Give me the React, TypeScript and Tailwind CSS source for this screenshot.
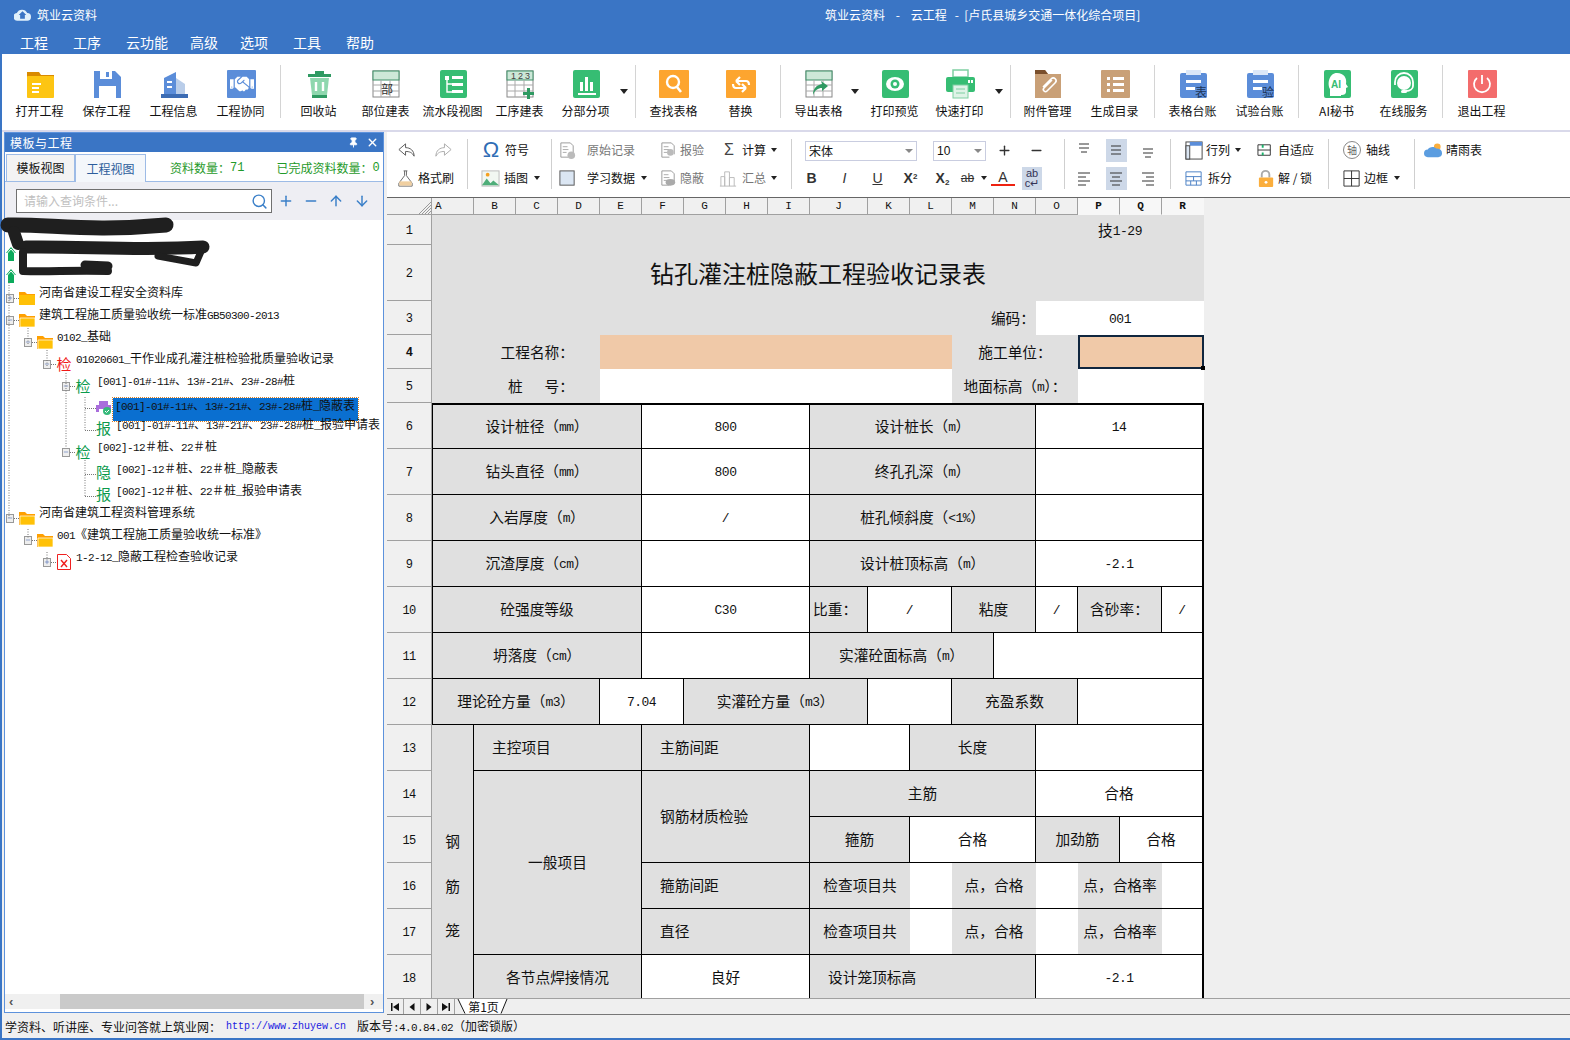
import type { ReactNode } from 'react'
import { FaHandshake } from 'react-icons/fa'
import { Plus, Minus, ArrowUp, ArrowDown, Search, Pin, X } from 'lucide-react'

const SHEET_LATIN = "relative top-[1px] font-['Liberation_Mono'] text-[13px] tracking-[-0.5px]"
const TREE_LATIN = "font-['Liberation_Mono'] text-[11px] tracking-[-0.6px]"

// ascii runs get a narrower face, like SimSun's half width latin
function Mix({ t, latin }: { t: string; latin: string }) {
  return (
    <>
      {t.split(/([\x20-\x7e]+)/).map((part, i) =>
        /^[\x20-\x7e]+$/.test(part) ? <span key={i} className={latin}>{part}</span> : <span key={i}>{part}</span>
      )}
    </>
  )
}

/* ---------- big toolbar ---------- */

function Big({ label, children }: { label: string; children: ReactNode }) {
  return (
    <div className="flex flex-col items-center w-[67px] shrink-0">
      <svg viewBox="0 0 32 30" className="w-[32px] h-[30px] mt-[15px]">{children}</svg>
      <div className="text-[12px] leading-4 mt-[4px] text-[#111] whitespace-nowrap">{label}</div>
    </div>
  )
}

function Sep({ className }: { className: string }) {
  return <div className={`w-px h-[53px] mt-[11px] bg-[#d4d4d4] shrink-0 ${className}`} />
}

function Drop({ className }: { className: string }) {
  return <div className={`w-0 h-0 mt-[35px] border-x-[4px] border-t-[5px] border-x-transparent border-t-[#222] shrink-0 ${className}`} />
}

function SheetIcon({ head, children }: { head: ReactNode; children?: ReactNode }) {
  return (
    <>
      <rect x="3" y="2" width="26" height="26" fill="#fff" stroke="#888" />
      <rect x="3" y="2" width="26" height="9" fill="#cde8d8" stroke="#3f8f68" />
      <path d="M3 16h26M3 22h26M11 11v17M20 11v17" stroke="#aaa" fill="none" />
      {head}
      {children}
    </>
  )
}

function GreenBox({ children }: { children: ReactNode }) {
  return (
    <>
      <rect x="3" y="1" width="27" height="28" rx="2" fill="#36bd73" />
      {children}
    </>
  )
}

function OrangeBox({ children }: { children: ReactNode }) {
  return (
    <>
      <rect x="1" y="1" width="30" height="28" rx="1" fill="#fda52f" />
      {children}
    </>
  )
}

function Clip({ ch }: { ch: string }) {
  return (
    <>
      <rect x="3" y="4" width="27" height="25" rx="2" fill="#5b8dd9" />
      <rect x="9" y="1" width="15" height="5" fill="#dbe7f8" />
      <rect x="9" y="11" width="15" height="3" fill="#fff" />
      <rect x="9" y="18" width="9" height="3" fill="#fff" />
      <text x="18" y="28" fontSize="12" fill="#1d3557" fontFamily="Noto Sans CJK SC">{ch}</text>
    </>
  )
}

function TopToolbar() {
  return (
    <div className="flex h-[76px] bg-white pl-[4px] overflow-hidden">
      <Big label="打开工程">
        <path d="M3 3h12l2 3h13v4H3z" fill="#d98a00" />
        <rect x="3" y="7" width="27" height="22" rx="1" fill="#fdc513" />
        <path d="M8 15h9M8 19h7M8 23h7" stroke="#fff" strokeWidth="2" />
      </Big>
      <Big label="保存工程">
        <path d="M3 2h21l6 6v21H3z" fill="#5b8dd9" />
        <rect x="9" y="2" width="12" height="8" fill="#fff" />
        <rect x="15" y="3" width="3" height="5" fill="#5b8dd9" />
        <rect x="8" y="17" width="17" height="12" fill="#fff" />
      </Big>
      <Big label="工程信息">
        <path d="M6 9l12-6v23H6z" fill="#5b8dd9" />
        <path d="M18 9l9 6v11h-9z" fill="#b9cde9" />
        <rect x="3" y="25" width="27" height="4" fill="#3c6cb4" />
        <path d="M9 13h5M9 18h5" stroke="#fff" strokeWidth="2" />
      </Big>
      <Big label="工程协同">
        <rect x="2" y="1" width="29" height="28" rx="1" fill="#5b8dd9" />
        <foreignObject x="5" y="3" width="24" height="24">
          <FaHandshake className="w-[24px] h-[24px] text-white" />
        </foreignObject>
      </Big>
      <Sep className="ml-[6px]" />
      <div className="flex ml-[4px]">
        <Big label="回收站">
          <rect x="5" y="5" width="23" height="3" fill="#2f9a62" />
          <rect x="12" y="2" width="9" height="3" fill="#2f9a62" />
          <path d="M7 9h19l-2 17H9z" fill="#8fd7ae" />
          <rect x="9" y="26" width="15" height="3" fill="#2f9a62" />
          <path d="M13 13v9M20 13v9" stroke="#fff" strokeWidth="2.4" />
        </Big>
        <Big label="部位建表">
          <SheetIcon head={<text x="11" y="25" fontSize="12" fill="#333" fontFamily="Noto Sans CJK SC">部</text>} />
        </Big>
        <Big label="流水段视图">
          <GreenBox>
            <path d="M8 7h4v4H8zM15 7h11v3H15zM15 14h11v3H15zM15 21h11v3H15z" fill="#fff" />
            <path d="M10 11v12h5M10 15h5" stroke="#fff" strokeWidth="1.4" fill="none" />
          </GreenBox>
        </Big>
        <Big label="工序建表">
          <SheetIcon head={<text x="7" y="10" fontSize="9" fill="#444" letterSpacing="2" fontFamily="Liberation Sans">123</text>}>
            <path d="M23 19h3v4h4v3h-4v4h-3v-4h-4v-3h4z" fill="#2f9a62" />
          </SheetIcon>
        </Big>
        <div className="-ml-[1px]">
          <Big label="分部分项">
            <GreenBox>
              <path d="M10 13h3v9h-3zM15 8h3v14h-3zM20 13h3v9h-3z" fill="#fff" />
              <rect x="8" y="24" width="18" height="2" fill="#fff" />
            </GreenBox>
          </Big>
        </div>
      </div>
      <Drop className="ml-[1px]" />
      <Sep className="ml-[7px]" />
      <div className="flex ml-[4px]">
        <Big label="查找表格">
          <OrangeBox>
            <circle cx="15" cy="13" r="6" fill="none" stroke="#fff" strokeWidth="2.4" />
            <path d="M19 18l4 5" stroke="#fff" strokeWidth="2.6" />
          </OrangeBox>
        </Big>
        <Big label="替换">
          <OrangeBox>
            <path d="M11 12h10c3 0 3 2 3 4M11 12l4-4M11 12l4 4M21 19H11c-3 0-3-2-3-4M21 19l-4-4M21 19l-4 4" stroke="#fff" strokeWidth="2.2" fill="none" />
          </OrangeBox>
        </Big>
      </div>
      <Sep className="ml-[6px]" />
      <div className="ml-[4px]">
        <Big label="导出表格">
          <SheetIcon head={<path d="M10 26c0-7 4-10 9-11l-1-3 7 5-6 5v-3c-4 0-7 2-9 7z" fill="#2f9a62" />} />
        </Big>
      </div>
      <Drop className="-ml-[1px]" />
      <div className="flex ml-[2px]">
        <Big label="打印预览">
          <GreenBox>
            <ellipse cx="16" cy="15" rx="9" ry="7" fill="#fff" />
            <circle cx="16" cy="15" r="4.5" fill="#36bd73" />
            <circle cx="16" cy="15" r="2" fill="#fff" />
          </GreenBox>
        </Big>
        <div className="-ml-[2px]">
          <Big label="快速打印">
            <rect x="9" y="1" width="15" height="7" fill="#fff" stroke="#7fcfa2" strokeWidth="1.5" />
            <rect x="2" y="8" width="29" height="15" rx="2" fill="#36bd73" />
            <rect x="24" y="11" width="2" height="3" fill="#fff" />
            <rect x="27" y="11" width="2" height="3" fill="#fff" />
            <rect x="9" y="16" width="15" height="13" fill="#dff3e7" stroke="#7fcfa2" />
            <path d="M12 20h9M12 24h9" stroke="#7fcfa2" />
          </Big>
        </div>
      </div>
      <Drop className="ml-[2px]" />
      <Sep className="ml-[7px]" />
      <div className="flex ml-[3px]">
        <Big label="附件管理">
          <path d="M3 1h10l3 4h13v24H3z" fill="#c9a077" />
          <path d="M3 1h10l3 4H3z" fill="#7a4f2c" />
          <path d="M20 11l-8 8c-2 2 1 5 3 3l8-8c3-3-1-7-4-4l-8 8" fill="none" stroke="#fff" strokeWidth="1.6" />
        </Big>
        <Big label="生成目录">
          <rect x="2" y="1" width="29" height="28" rx="1" fill="#c9a077" />
          <path d="M8 8h3v3H8zM14 8h11v3H14zM8 14h3v3H8zM14 14h11v3H14zM8 20h3v3H8zM14 20h11v3H14z" fill="#fff" />
        </Big>
      </div>
      <Sep className="ml-[6px]" />
      <div className="flex ml-[4px]">
        <Big label="表格台账"><Clip ch="表" /></Big>
        <Big label="试验台账"><Clip ch="验" /></Big>
      </div>
      <Sep className="ml-[5px]" />
      <div className="flex ml-[4px]">
        <Big label="AI秘书">
          <GreenBox>
            <path d="M16 4c7 0 10 5 9 11l2 3-2 1v4c0 2-2 3-4 3h-1v1H9v-7c-3-5-1-16 7-16z" fill="#fff" />
            <text x="10" y="19" fontSize="10" fontWeight="700" fill="#36bd73" fontFamily="Liberation Sans">AI</text>
          </GreenBox>
        </Big>
        <Big label="在线服务">
          <GreenBox>
            <circle cx="16" cy="14" r="7" fill="#fff" />
            <path d="M7 16v-3a9 9 0 0 1 18 0v4c0 3-3 5-7 5" fill="none" stroke="#fff" strokeWidth="1.8" />
            <rect x="13" y="21" width="6" height="3" rx="1.5" fill="#fff" />
          </GreenBox>
        </Big>
      </div>
      <Sep className="ml-[5px]" />
      <div className="ml-[5px]">
        <Big label="退出工程">
          <rect x="2" y="1" width="29" height="28" rx="1" fill="#f36c6c" />
          <path d="M11 9a8 8 0 1 0 10 0" fill="none" stroke="#fff" strokeWidth="1.8" />
          <path d="M16 6v9" stroke="#fff" strokeWidth="1.8" />
        </Big>
      </div>
    </div>
  )
}

/* ---------- format toolbar ---------- */

function Ico({ className, children }: { className?: string; children: ReactNode }) {
  return <svg viewBox="0 0 20 20" className={`w-[19px] h-[19px] shrink-0 ${className ?? ''}`}>{children}</svg>
}

function Car() {
  return <div className="w-0 h-0 border-x-[3px] border-t-[4px] border-x-transparent border-t-[#222] shrink-0" />
}

function VSep() {
  return <div className="w-px h-[50px] mt-[3px] bg-[#cfcfcf] shrink-0" />
}

function Doc({ children }: { children: ReactNode }) {
  return (
    <Ico>
      <path d="M3 2h10l3 3v9M3 2v15h8" fill="none" stroke="#999" />
      <path d="M5 6h5M5 9h6M5 12h4" stroke="#aaa" />
      {children}
    </Ico>
  )
}

function AlignLines({ d, on }: { d: string; on?: boolean }) {
  return (
    <div className={`flex items-center justify-center w-[21px] h-[23px] ${on ? 'bg-[#cdd8e8]' : ''}`}>
      <svg viewBox="0 0 14 16" className="w-[14px] h-[16px]">
        <path d={d} stroke="#333" fill="none" />
      </svg>
    </div>
  )
}

function FormatToolbar() {
  return (
    <div className="flex h-[65px] bg-white pt-[4px] text-[12px] leading-none text-[#111] shrink-0">
      <div className="w-[80px] shrink-0">
        <div className="flex items-center h-7">
          <Ico className="ml-[10px]">
            <path d="M9 3L2 9l7 6v-4c4 0 7 1 9 5 0-6-4-9-9-9z" fill="none" stroke="#555" />
          </Ico>
          <Ico className="ml-[18px]">
            <path d="M11 3l7 6-7 6v-4c-4 0-7 1-9 5 0-6 4-9 9-9z" fill="none" stroke="#aaa" />
          </Ico>
        </div>
        <div className="flex items-center h-7">
          <Ico className="ml-[9px]">
            <path d="M8 2h4M9 2v5L3 15v3h14v-3l-6-8V2" fill="none" stroke="#666" />
            <path d="M3.500 13h13v4.500h-13z" fill="#f0cfa0" />
          </Ico>
          <span className="ml-[3px]">格式刷</span>
        </div>
      </div>
      <VSep />
      <div className="w-[83px] shrink-0 pl-[13px]">
        <div className="flex items-center h-7">
          <span className="w-[20px] text-center text-[22px] text-[#2f6db5] font-['Liberation_Sans']">Ω</span>
          <span className="ml-[4px]">符号</span>
        </div>
        <div className="flex items-center h-7">
          <Ico>
            <rect x="1" y="2" width="18" height="16" fill="#f2f7f2" stroke="#bbb" />
            <path d="M1 17l5-7 4 5 3-3 6 5z" fill="#4fae7a" />
            <circle cx="7" cy="6" r="2" fill="#f5a020" />
          </Ico>
          <span className="ml-[4px] mr-[6px]">插图</span>
          <Car />
        </div>
      </div>
      <VSep />
      <div className="w-[239px] shrink-0 pl-[6px]">
        <div className="flex items-center h-7 text-[#777]">
          <div className="flex items-center w-[101px]">
            <Doc><circle cx="14" cy="15" r="4" fill="#bbb" /></Doc>
            <span className="ml-[10px]">原始记录</span>
          </div>
          <div className="flex items-center w-[60px]">
            <Doc><circle cx="12" cy="12" r="3.500" fill="#bbb" /></Doc>
            <span className="ml-[2px]">报验</span>
          </div>
          <div className="flex items-center text-[#111]">
            <span className="w-[20px] text-center text-[16px] text-[#444] font-['Liberation_Sans']">Σ</span>
            <span className="ml-[3px] mr-[5px]">计算</span>
            <Car />
          </div>
        </div>
        <div className="flex items-center h-7 text-[#777]">
          <div className="flex items-center w-[101px]">
            <Ico>
              <rect x="2" y="2" width="15" height="15" fill="#dbe6f3" stroke="#555" />
            </Ico>
            <span className="ml-[10px] mr-[6px] text-[#111]">学习数据</span>
            <Car />
          </div>
          <div className="flex items-center w-[60px]">
            <Doc><ellipse cx="12" cy="14" rx="5" ry="3.500" fill="#aaa" /></Doc>
            <span className="ml-[2px]">隐蔽</span>
          </div>
          <div className="flex items-center">
            <Ico>
              <path d="M2 18V8h4v10M6 18V3h5v15M11 18V9h5v9M1 18h17" fill="none" stroke="#bbb" />
            </Ico>
            <span className="ml-[4px] mr-[5px]">汇总</span>
            <Car />
          </div>
        </div>
      </div>
      <VSep />
      <div className="w-[272px] shrink-0">
        <div className="flex items-center h-7">
          <div className="flex items-center justify-between w-[112px] h-[20px] mt-[2px] ml-[13px] border border-[#c9cde0] pl-[3px] pr-[3px]">
            宋体
            <div className="w-0 h-0 border-x-[4px] border-t-[4px] border-x-transparent border-t-[#888]" />
          </div>
          <div className="flex items-center justify-between w-[53px] h-[20px] mt-[2px] ml-[16px] border border-[#c9cde0] pl-[3px] pr-[3px] font-['Liberation_Sans']">
            10
            <div className="w-0 h-0 border-x-[4px] border-t-[4px] border-x-transparent border-t-[#888]" />
          </div>
          <Plus size={15} strokeWidth={2.2} className="ml-[11px] text-[#333]" />
          <Minus size={15} strokeWidth={2.2} className="ml-[17px] text-[#333]" />
        </div>
        <div className="flex items-center h-7 font-['Liberation_Sans'] text-[14px] pl-[3px]">
          <span className="w-[33px] text-center font-bold text-[#333]">B</span>
          <span className="w-[33px] text-center italic text-[#333]">I</span>
          <span className="w-[33px] text-center underline text-[#333]">U</span>
          <span className="w-[33px] text-center font-bold text-[#333]">X<sup className="text-[8px]">2</sup></span>
          <span className="w-[31px] text-center font-bold text-[#333]">X<sub className="text-[8px]">2</sub></span>
          <span className="w-[19px] text-center text-[12px] line-through text-[#333]">ab</span>
          <div className="ml-[4px]"><Car /></div>
          <span className="w-[24px] ml-[4px] text-center border-b-2 border-[#e21] leading-[14px] text-[#333]">A</span>
          <span className="flex flex-col items-center justify-center w-[20px] h-[23px] ml-[7px] bg-[#cdd8e8] text-[11px] leading-[10px] text-[#335]">
            <span>ab</span>
            <span>c↵</span>
          </span>
        </div>
      </div>
      <VSep />
      <div className="w-[105px] shrink-0 grid grid-cols-[32px_32px_32px] pl-[3px] justify-items-center items-center h-14">
        <AlignLines d="M2 2h10M2 6h10M4 10h6" />
        <AlignLines on d="M2 4h10M2 8h10M2 12h10" />
        <AlignLines d="M2 7h10M2 11h10M4 15h6" />
        <AlignLines d="M1 3h12M1 7h8M1 11h12M1 15h8" />
        <AlignLines on d="M1 3h12M3 7h8M1 11h12M3 15h8" />
        <AlignLines d="M1 3h12M5 7h8M1 11h12M5 15h8" />
      </div>
      <VSep />
      <div className="w-[157px] shrink-0 pl-[14px]">
        <div className="flex items-center h-7">
          <div className="flex items-center w-[72px]">
            <Ico>
              <rect x="1" y="1" width="17" height="18" fill="#fff" stroke="#444" />
              <rect x="5" y="1" width="13" height="4" fill="#5b8dd9" />
              <rect x="1" y="5" width="4" height="14" fill="#dbe6f3" stroke="#444" />
            </Ico>
            <span className="ml-[2px] mr-[5px]">行列</span>
            <Car />
          </div>
          <Ico>
            <path d="M1 4h13M1 15h13M1 4v11M14 4v11M1 9.500h13" stroke="#333" fill="none" />
            <path d="M6 4v3M6 12v3" stroke="#19b36b" strokeWidth="2" />
          </Ico>
          <span className="ml-[2px]">自适应</span>
        </div>
        <div className="flex items-center h-7">
          <div className="flex items-center w-[72px]">
            <Ico>
              <path d="M1 3h16v14H1zM1 8h16M1 12.500h16M9 8v4.500M6 12.500V17M12 12.500V17" fill="none" stroke="#4a80c4" />
            </Ico>
            <span className="ml-[4px]">拆分</span>
          </div>
          <Ico>
            <path d="M5 9V6a4 4 0 0 1 8 0v3" fill="none" stroke="#aaa" strokeWidth="2" />
            <rect x="2" y="9" width="15" height="10" rx="1" fill="#fbae3c" />
            <circle cx="9.500" cy="14" r="1.500" fill="#fff" />
          </Ico>
          <span className="ml-[2px] whitespace-pre">解 / 锁</span>
        </div>
      </div>
      <VSep />
      <div className="w-[85px] shrink-0 pl-[14px]">
        <div className="flex items-center h-7">
          <span className="flex items-center justify-center w-[18px] h-[18px] rounded-full border border-[#888] text-[10px] text-[#666]">轴</span>
          <span className="ml-[5px]">轴线</span>
        </div>
        <div className="flex items-center h-7">
          <Ico>
            <path d="M1 2h16v16H1zM9 2v16M1 10h16" fill="none" stroke="#333" />
          </Ico>
          <span className="ml-[2px] mr-[6px]">边框</span>
          <Car />
        </div>
      </div>
      <VSep />
      <div className="pl-[9px]">
        <div className="flex items-center h-7">
          <Ico>
            <circle cx="14" cy="6" r="3.500" fill="#fbae3c" />
            <path d="M4 17a4 4 0 0 1 0-8c1-3 7-4 9-1 4 0 6 2 6 5s-2 4-4 4z" fill="#5b9de0" />
          </Ico>
          <span className="ml-[3px]">晴雨表</span>
        </div>
      </div>
    </div>
  )
}

/* ---------- left tree ---------- */

const BOX_PAD = ['pl-[1px]', 'pl-[19px]', 'pl-[38px]', 'pl-[57px]']

function Folder({ open }: { open?: boolean }) {
  return (
    <svg viewBox="0 0 16 14" className="w-[16px] h-[14px] shrink-0">
      <path d="M0 1h6l2 2h8v11H0z" fill="#ffa000" />
      {open ? <path d="M1 5h15v9H1z" fill="#ffc107" stroke="#fff" strokeWidth="0.7" /> : <rect x="0" y="4" width="16" height="10" fill="#ffc107" />}
    </svg>
  )
}

function TreeRow({ level, plus, icon, text, sel }: { level: number; plus?: boolean; icon: ReactNode; text: string; sel?: boolean }) {
  const label = (
    <span className={`inline-block whitespace-nowrap text-[12px] leading-none ${sel ? '-translate-y-[2px] bg-[#0a6fd0] outline-1 outline-dotted outline-[#e08020] pt-[1px] pb-[8px] pl-[2px] pr-[3px] -ml-[3px]' : '-translate-y-[8px]'}`}>
      <Mix t={text} latin={TREE_LATIN} />
    </span>
  )
  if (level === 4) {
    return (
      <div className="flex items-center h-[22px] pl-[80px]">
        <div className="w-[11px] border-t border-dotted border-[#777] shrink-0" />
        <div className="w-[15px] flex justify-center shrink-0">{icon}</div>
        <div className="ml-[5px]">{label}</div>
      </div>
    )
  }
  return (
    <div className={`flex items-center h-[22px] ${BOX_PAD[level]}`}>
      <div className="flex items-center justify-center w-[8px] h-[9px] bg-[#eee] border border-[#999] text-[#3355aa] shrink-0">
        {plus ? <Plus size={8} strokeWidth={2} /> : <Minus size={8} strokeWidth={2} />}
      </div>
      <div className="w-[5px] border-t border-dotted border-[#777] shrink-0" />
      <div className="w-[16px] flex justify-center shrink-0">{icon}</div>
      <div className={level === 3 ? 'ml-[6px]' : 'ml-[4px]'}>{label}</div>
    </div>
  )
}

function Tag({ ch, red, leaf }: { ch: string; red?: boolean; leaf?: boolean }) {
  return (
    <span className={`text-[15px] leading-none ${leaf ? '-translate-y-[3px]' : '-translate-y-[1px]'} ${red ? 'text-[#f01818]' : 'text-[#0a9a4c]'}`}>
      {ch}
    </span>
  )
}

function GreenUp() {
  return (
    <div className="flex items-center h-[22px] pl-[1px]">
      <svg viewBox="0 0 10 14" className="w-[10px] h-[14px]">
        <path d="M5 0l5 6H8v8H2V6H0z" fill="#0bab5c" />
        <path d="M1.500 6L5 2l3.500 4" fill="none" stroke="#fff" />
      </svg>
    </div>
  )
}

function Tree() {
  return (
    <div className="relative flex-1 bg-white pt-[23px]">
      {/* dotted connector lines */}
      <svg className="absolute left-0 top-0 w-full h-full" fill="none" stroke="#777" strokeDasharray="1 1.5">
        <path d="M4 60V298M23 108V124M23 309V318M42 130V146M42 332V340M61 153V228M80 177V210M80 240V277" />
      </svg>
      <GreenUp />
      <GreenUp />
      <TreeRow level={0} plus icon={<Folder />} text="河南省建设工程安全资料库" />
      <TreeRow level={0} icon={<Folder open />} text="建筑工程施工质量验收统一标准GB50300-2013" />
      <TreeRow level={1} icon={<Folder open />} text="0102_基础" />
      <TreeRow level={2} icon={<Tag ch="检" red />} text="01020601_干作业成孔灌注桩检验批质量验收记录" />
      <TreeRow level={3} icon={<Tag ch="检" />} text="[001]-01#-11#、13#-21#、23#-28#桩" />
      <TreeRow
        level={4}
        sel
        icon={
          <svg viewBox="0 0 15 14" className="w-[15px] h-[14px]">
            <path d="M3 0h9v4H3zM0 4h15v7H0z" fill="#a96ddc" />
            <rect x="3" y="8" width="8" height="6" fill="#fff" />
            <circle cx="11" cy="10" r="4" fill="#35b97a" />
            <path d="M9 10l1.500 1.500L13 9" stroke="#fff" fill="none" />
          </svg>
        }
        text="[001]-01#-11#、13#-21#、23#-28#桩_隐蔽表"
      />
      <TreeRow level={4} icon={<Tag ch="报" leaf />} text="[001]-01#-11#、13#-21#、23#-28#桩_报验申请表" />
      <TreeRow level={3} icon={<Tag ch="检" />} text="[002]-12＃桩、22＃桩" />
      <TreeRow level={4} icon={<Tag ch="隐" leaf />} text="[002]-12＃桩、22＃桩_隐蔽表" />
      <TreeRow level={4} icon={<Tag ch="报" leaf />} text="[002]-12＃桩、22＃桩_报验申请表" />
      <TreeRow level={0} icon={<Folder open />} text="河南省建筑工程资料管理系统" />
      <TreeRow level={1} icon={<Folder open />} text="001《建筑工程施工质量验收统一标准》" />
      <TreeRow
        level={2}
        plus
        icon={
          <svg viewBox="0 0 14 16" className="w-[14px] h-[16px]">
            <path d="M.5.5h9l4 4v11H.5z" fill="#fff" stroke="#f02020" />
            <path d="M4 6l6 7M10 6l-6 7" stroke="#f02020" strokeWidth="1.4" />
          </svg>
        }
        text="1-2-12_隐蔽工程检查验收记录"
      />
      {/* redaction scribble from the screenshot */}
      <svg className="absolute left-[-5px] top-[-15px] w-[230px] h-[80px]" viewBox="0 205 230 80" fill="none" stroke="#1f1f1f" strokeLinecap="round" strokeLinejoin="round">
        <path d="M8 225C50 224 90 232 166 225" strokeWidth="15" />
        <path d="M14 232L18 244" strokeWidth="12" />
        <path d="M26 247C80 246 140 251 203 247" strokeWidth="13" />
        <path d="M203 247L196 263L158 256" strokeWidth="7" />
        <path d="M23 252V271C50 272 70 270 108 271" strokeWidth="8" />
        <path d="M85 265L108 266" strokeWidth="9" />
      </svg>
    </div>
  )
}

function LeftPanel() {
  return (
    <div className="flex flex-col w-[380px] h-[881px] ml-[2px] shrink-0 border border-[#5d92dc] bg-white text-[#111]">
      <div className="flex items-center justify-between h-[19px] bg-[#3a75c5] text-white text-[12px] pl-[5px] pr-[4px] shrink-0">
        <span className="tracking-[0.5px]">模板与工程</span>
        <div className="flex items-center gap-[7px]">
          <Pin size={11} fill="#fff" />
          <X size={13} strokeWidth={2.6} />
        </div>
      </div>
      <div className="flex h-[30px] pl-[1px] pt-[2px] text-[12px] bg-white border-b border-[#9dbbe6] shrink-0">
        <div className="flex items-center justify-center w-[69px] bg-[#f3f3f3] border border-b-0 border-[#9dbbe6]">模板视图</div>
        <div className="flex items-center justify-center w-[71px] h-[28px] bg-[#f4f7fb] border-x border-t border-[#9dbbe6] text-[#2c5d9c]">工程视图</div>
        <div className="flex items-center ml-[24px] text-[#1f9a2a] whitespace-nowrap">
          资料数量：<span className="font-['Liberation_Mono']">71</span>
        </div>
        <div className="flex items-center ml-[32px] text-[#1f9a2a] whitespace-nowrap">
          已完成资料数量：<span className="font-['Liberation_Mono']">0</span>
        </div>
      </div>
      <div className="flex items-center h-[38px] pl-[11px] bg-[#eeeef3] shrink-0">
        <div className="flex items-center justify-between w-[256px] h-[24px] bg-white border border-[#707070] pl-[7px] pr-[3px]">
          <span className="text-[12px] text-[#c0c0c0]">请输入查询条件...</span>
          <Search size={17} className="text-[#3a7fc8]" />
        </div>
        <Plus size={16} strokeWidth={2.2} className="ml-[6px] text-[#3a7fc8]" />
        <Minus size={16} strokeWidth={2.2} className="ml-[9px] text-[#3a7fc8]" />
        <ArrowUp size={16} strokeWidth={2.2} className="ml-[9px] text-[#3a7fc8]" />
        <ArrowDown size={16} strokeWidth={2.2} className="ml-[10px] text-[#3a7fc8]" />
      </div>
      <Tree />
      <div className="flex items-center h-[15px] bg-[#f0f0f0] mb-[3px] shrink-0 text-[#555]">
        <span className="w-[55px] pl-[4px] text-[13px] font-bold leading-none font-['Liberation_Sans']">‹</span>
        <div className="w-[304px] h-full bg-[#cacaca]" />
        <span className="pl-[6px] text-[13px] font-bold leading-none font-['Liberation_Sans']">›</span>
      </div>
    </div>
  )
}

/* ---------- spreadsheet ---------- */

const GRAY = 'bg-[#e0e0e0]'
const WHITE = 'bg-white'
const LINE = 'border-r border-b border-black'

function C({ at, bg = GRAY, left, line = LINE, t }: { at: string; bg?: string; left?: boolean; line?: string; t?: string }) {
  return (
    <div className={`flex items-center whitespace-pre ${left ? 'pl-[18px]' : 'justify-center'} ${at} ${bg} ${line}`}>
      {t ? <Mix t={t} latin={SHEET_LATIN} /> : null}
    </div>
  )
}

const COLS: [string, string][] = [
  ['B', 'w-[42px]'], ['C', 'w-[42px]'], ['D', 'w-[42px]'], ['E', 'w-[42px]'], ['F', 'w-[42px]'], ['G', 'w-[42px]'],
  ['H', 'w-[42px]'], ['I', 'w-[42px]'], ['J', 'w-[58px]'], ['K', 'w-[42px]'], ['L', 'w-[42px]'], ['M', 'w-[42px]'],
  ['N', 'w-[42px]'], ['O', 'w-[42px]'],
]

const ROW_H = ['h-[30px]', 'h-[56px]', 'h-[34px]', 'h-[34px]', 'h-[34px]', ...Array<string>(13).fill('h-[46px]')]

function HeadCell({ label, className }: { label: string; className: string }) {
  return <div className={`flex items-center justify-center h-full border-r border-[#a0a0a0] border-b ${className}`}>{label}</div>
}

function Sheet() {
  return (
    <div className="relative flex-1 overflow-hidden bg-[#efefef] border-t border-[#666] text-[14.7px] leading-none text-[#111]">
      <div className="flex h-[17px] font-['Liberation_Mono'] text-[11px]">
        <div className="relative w-[45px] border-r border-b border-[#a0a0a0] bg-[#f0f0f0]">
          <svg viewBox="0 0 12 12" className="absolute right-0 bottom-0 w-[12px] h-[12px]">
            <path d="M12 0L0 12M12 3L3 12M12 6L6 12M12 9L9 12" stroke="#999" />
          </svg>
        </div>
        <div className="flex items-center w-[42px] h-full pl-[3px] border-r border-b border-[#a0a0a0] bg-[#f0f0f0]">A</div>
        {COLS.map(([l, w]) => (
          <HeadCell key={l} label={l} className={`${w} bg-[#f0f0f0] border-b-[#a0a0a0]`} />
        ))}
        <HeadCell label="P" className="w-[42px] bg-[#f7f7f7] font-bold border-b-transparent" />
        <HeadCell label="Q" className="w-[42px] bg-[#f7f7f7] font-bold border-b-transparent" />
        <HeadCell label="R" className="w-[42px] bg-[#f7f7f7] font-bold border-b-transparent border-r-transparent" />
      </div>
      <div className="flex">
        <div className="w-[45px] shrink-0 font-['Liberation_Mono'] text-[12px] tracking-[-0.6px]">
          {ROW_H.map((h, i) => (
            <div key={i} className={`flex items-center justify-center pt-[2px] ${h} bg-[#f0f0f0] border-r border-b border-[#a0a0a0] ${i === 3 ? 'font-bold' : ''}`}>
              {i + 1}
            </div>
          ))}
        </div>
        <div className="grid grid-cols-[repeat(9,42px)_58px_repeat(8,42px)] grid-rows-[30px_56px_34px_34px_34px_repeat(14,46px)]">
          <C at="col-[1/16] row-[1/2]" line="" />
          <C at="col-[16/18] row-[1/2]" line="" t="技1-29" />
          <C at="col-[18/19] row-[1/2]" line="" />
          <div className={`flex items-center justify-center col-[1/19] row-[2/3] ${GRAY} text-[24px]`}>钻孔灌注桩隐蔽工程验收记录表</div>

          <div className={`flex items-center justify-end pr-[1px] col-[1/15] row-[3/4] ${GRAY}`}>编码：</div>
          <C at="col-[15/19] row-[3/4]" bg={WHITE} line="" t="001" />

          <div className={`flex items-center justify-end pr-[26px] col-[1/5] row-[4/5] ${GRAY}`}>工程名称：</div>
          <C at="col-[5/13] row-[4/5]" bg="bg-[#f0c9a8]" line="" />
          <C at="col-[13/16] row-[4/5]" line="" t="施工单位：" />
          <div className="relative col-[16/19] row-[4/5] bg-[#f0c9a8] border-2 border-[#10263f]">
            <div className="absolute -right-[3px] -bottom-[3px] w-[4px] h-[4px] bg-black" />
          </div>

          <div className={`flex items-center justify-end pr-[26px] col-[1/5] row-[5/6] whitespace-pre ${GRAY}`}>
            <Mix t="桩   号：" latin={SHEET_LATIN} />
          </div>
          <C at="col-[5/13] row-[5/6]" bg={WHITE} line="" />
          <C at="col-[13/16] row-[5/6]" line="" t="地面标高（m）：" />
          <C at="col-[16/19] row-[5/6]" bg={WHITE} line="" />

          <C at="col-[1/6] row-[6/7] border-t-2 border-l" t="设计桩径（mm）" />
          <C at="col-[6/10] row-[6/7] border-t-2" bg={WHITE} t="800" />
          <C at="col-[10/15] row-[6/7] border-t-2" t="设计桩长（m）" />
          <C at="col-[15/19] row-[6/7] border-t-2 border-r-2" bg={WHITE} t="14" />

          <C at="col-[1/6] row-[7/8] border-l" t="钻头直径（mm）" />
          <C at="col-[6/10] row-[7/8]" bg={WHITE} t="800" />
          <C at="col-[10/15] row-[7/8]" t="终孔孔深（m）" />
          <C at="col-[15/19] row-[7/8] border-r-2" bg={WHITE} />

          <C at="col-[1/6] row-[8/9] border-l" t="入岩厚度（m）" />
          <C at="col-[6/10] row-[8/9]" bg={WHITE} t="/" />
          <C at="col-[10/15] row-[8/9]" t="桩孔倾斜度（<1%）" />
          <C at="col-[15/19] row-[8/9] border-r-2" bg={WHITE} />

          <C at="col-[1/6] row-[9/10] border-l" t="沉渣厚度（cm）" />
          <C at="col-[6/10] row-[9/10]" bg={WHITE} />
          <C at="col-[10/15] row-[9/10]" t="设计桩顶标高（m）" />
          <C at="col-[15/19] row-[9/10] border-r-2" bg={WHITE} t="-2.1" />

          <C at="col-[1/6] row-[10/11] border-l" t="砼强度等级" />
          <C at="col-[6/10] row-[10/11]" bg={WHITE} t="C30" />
          <div className={`flex items-center pl-[3px] col-[10/11] row-[10/11] ${GRAY} ${LINE}`}>比重：</div>
          <C at="col-[11/13] row-[10/11]" bg={WHITE} t="/" />
          <C at="col-[13/15] row-[10/11]" t="粘度" />
          <C at="col-[15/16] row-[10/11]" bg={WHITE} t="/" />
          <C at="col-[16/18] row-[10/11]" t="含砂率：" />
          <C at="col-[18/19] row-[10/11] border-r-2" bg={WHITE} t="/" />

          <C at="col-[1/6] row-[11/12] border-l" t="坍落度（cm）" />
          <C at="col-[6/10] row-[11/12]" bg={WHITE} />
          <C at="col-[10/14] row-[11/12]" t="实灌砼面标高（m）" />
          <C at="col-[14/19] row-[11/12] border-r-2" bg={WHITE} />

          <C at="col-[1/5] row-[12/13] border-l" t="理论砼方量（m3）" />
          <C at="col-[5/7] row-[12/13]" bg={WHITE} t="7.04" />
          <C at="col-[7/11] row-[12/13]" t="实灌砼方量（m3）" />
          <C at="col-[11/13] row-[12/13]" bg={WHITE} />
          <C at="col-[13/16] row-[12/13]" t="充盈系数" />
          <C at="col-[16/19] row-[12/13] border-r-2" bg={WHITE} />

          <div className={`flex flex-col items-center justify-center gap-[30px] col-[1/2] row-[13/20] ${GRAY} border-r border-black`}>
            <span>钢</span>
            <span>筋</span>
            <span>笼</span>
          </div>
          <C at="col-[2/6] row-[13/14]" left t="主控项目" />
          <C at="col-[6/10] row-[13/14]" left t="主筋间距" />
          <C at="col-[10/12] row-[13/14]" bg={WHITE} />
          <C at="col-[12/15] row-[13/14]" t="长度" />
          <C at="col-[15/19] row-[13/14] border-r-2" bg={WHITE} />

          <C at="col-[2/6] row-[14/18]" t="一般项目" />
          <C at="col-[6/10] row-[14/16]" left t="钢筋材质检验" />
          <C at="col-[10/15] row-[14/15]" t="主筋" />
          <C at="col-[15/19] row-[14/15] border-r-2" bg={WHITE} t="合格" />

          <C at="col-[10/12] row-[15/16]" t="箍筋" />
          <C at="col-[12/15] row-[15/16]" bg={WHITE} t="合格" />
          <C at="col-[15/17] row-[15/16]" t="加劲筋" />
          <C at="col-[17/19] row-[15/16] border-r-2" bg={WHITE} t="合格" />

          <C at="col-[6/10] row-[16/17]" left t="箍筋间距" />
          <C at="col-[10/12] row-[16/17]" line="border-b border-black" t="检查项目共" />
          <C at="col-[12/13] row-[16/17]" bg={WHITE} line="border-b border-black" />
          <C at="col-[13/15] row-[16/17]" line="border-b border-black" t="点，合格" />
          <C at="col-[15/16] row-[16/17]" bg={WHITE} line="border-b border-black" />
          <C at="col-[16/18] row-[16/17]" line="border-b border-black" t="点，合格率" />
          <C at="col-[18/19] row-[16/17] border-r-2 border-r-black" bg={WHITE} line="border-b border-black" />

          <C at="col-[6/10] row-[17/18]" left t="直径" />
          <C at="col-[10/12] row-[17/18]" line="border-b border-black" t="检查项目共" />
          <C at="col-[12/13] row-[17/18]" bg={WHITE} line="border-b border-black" />
          <C at="col-[13/15] row-[17/18]" line="border-b border-black" t="点，合格" />
          <C at="col-[15/16] row-[17/18]" bg={WHITE} line="border-b border-black" />
          <C at="col-[16/18] row-[17/18]" line="border-b border-black" t="点，合格率" />
          <C at="col-[18/19] row-[17/18] border-r-2 border-r-black" bg={WHITE} line="border-b border-black" />

          <C at="col-[2/6] row-[18/19]" t="各节点焊接情况" />
          <C at="col-[6/10] row-[18/19]" bg={WHITE} t="良好" />
          <C at="col-[10/15] row-[18/19]" left t="设计笼顶标高" />
          <C at="col-[15/19] row-[18/19] border-r-2" bg={WHITE} t="-2.1" />
        </div>
      </div>
    </div>
  )
}

function NavBtn({ d }: { d: string }) {
  return (
    <div className="flex items-center justify-center w-[17px] h-full border-r border-[#a0a0a0]">
      <svg viewBox="0 0 10 10" className="w-[10px] h-[10px]">
        <path d={d} fill="#111" />
      </svg>
    </div>
  )
}

function TabBar() {
  return (
    <div className="flex items-stretch h-[17px] bg-[#efefef] border-t border-[#a0a0a0] border-b-[1.500px] border-b-[#777] shrink-0">
      <NavBtn d="M1 1h1.500v8H1zM9 1v8L3 5z" />
      <NavBtn d="M7.500 1v8L2.500 5z" />
      <NavBtn d="M2.500 1v8l5-4z" />
      <NavBtn d="M7.500 1H9v8H7.500zM1 1v8l6-4z" />
      <div className="relative flex items-center justify-center w-[56px] ml-[2px] text-[12px] leading-none text-[#111]">
        <svg viewBox="0 0 56 16" preserveAspectRatio="none" className="absolute inset-0 w-full h-full">
          <path d="M1 0L8 15.500H44L50 0z" fill="#fff" />
          <path d="M1 0L8 15.500M44 15.500L50 0" stroke="#111" fill="none" />
        </svg>
        <span className="relative -ml-[3px]">第1页</span>
      </div>
    </div>
  )
}

/* ---------- page ---------- */

export default function App() {
  return (
    <div className="flex flex-col w-[1570px] h-[1040px] overflow-hidden bg-[#3a75c5] font-['Noto_Sans_CJK_SC','Liberation_Sans',sans-serif]">
      <div className="relative flex items-center h-[30px] text-white text-[12px] shrink-0">
        <svg viewBox="0 0 18 14" className="w-[17px] h-[14px] ml-[14px]">
          <path d="M4 13a4 4 0 0 1-1-8 6 6 0 0 1 11 0 4 4 0 0 1 0 8z" fill="#dff0fb" />
          <path d="M9 3L5 7h1.500v4h5V7H13z" fill="#3a75c5" />
        </svg>
        <span className="ml-[6px]">筑业云资料</span>
        <span className="ml-[728px] whitespace-pre">筑业云资料    -    云工程   -  [卢氏县城乡交通一体化综合项目]</span>
      </div>
      <div className="flex items-center h-[24px] text-white text-[14px] pl-[20px] shrink-0">
        <span>工程</span>
        <span className="ml-[25px]">工序</span>
        <span className="ml-[25px]">云功能</span>
        <span className="ml-[22px]">高级</span>
        <span className="ml-[22px]">选项</span>
        <span className="ml-[25px]">工具</span>
        <span className="ml-[25px]">帮助</span>
      </div>
      <div className="ml-[2px] flex-1 flex flex-col bg-[#f0f0f0] min-h-0">
        <TopToolbar />
        <div className="h-[2px] bg-[#d9d9ea] shrink-0" />
        <div className="flex h-[883px] shrink-0">
          <LeftPanel />
          <div className="flex flex-col flex-1 ml-[3px] min-w-0">
            <FormatToolbar />
            <Sheet />
            <TabBar />
          </div>
        </div>
        <div className="flex items-center flex-1 text-[12px] leading-none text-[#111] pl-[3px] whitespace-nowrap">
          <span>学资料、听讲座、专业问答就上筑业网：</span>
          <span className="ml-[5px] font-['Liberation_Mono'] text-[10px] text-[#1a1ae0]">http://www.zhuyew.cn</span>
          <span className="ml-[11px]">
            <Mix t="版本号:4.0.84.02（加密锁版）" latin={TREE_LATIN} />
          </span>
        </div>
      </div>
      <div className="h-[2px] bg-[#3a75c5] shrink-0" />
    </div>
  )
}
